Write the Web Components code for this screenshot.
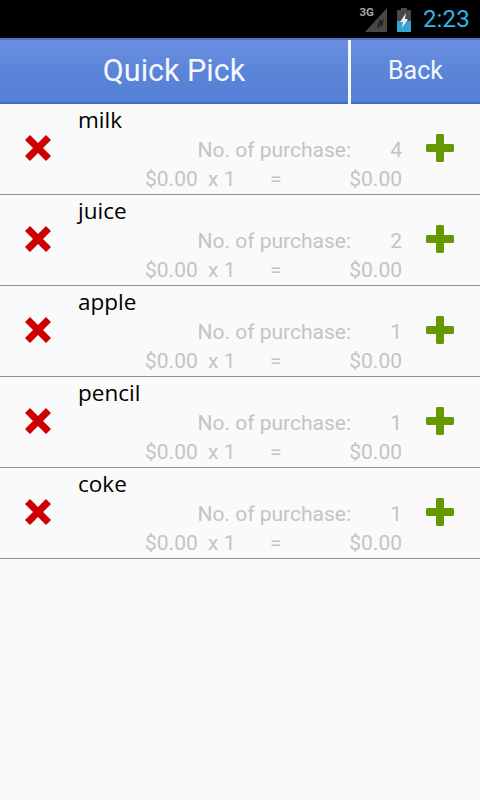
<!DOCTYPE html>
<html>
<head>
<meta charset="utf-8">
<style>
  html, body { margin: 0; height: 100%; background: #fafafa; }
  body { font-family: Roboto, "Liberation Sans", sans-serif; }
</style>
</head>
<body>
<status-bar time="2:23"></status-bar>
<title-bar heading="Quick Pick" action="Back"></title-bar>
<pick-list>
  <pick-row name="milk" count="4"></pick-row>
  <pick-row name="juice" count="2"></pick-row>
  <pick-row name="apple" count="1"></pick-row>
  <pick-row name="pencil" count="1"></pick-row>
  <pick-row name="coke" count="1"></pick-row>
</pick-list>
<script>
  class StatusBar extends HTMLElement {
    connectedCallback() {
      const root = this.attachShadow({ mode: 'open' });
      root.innerHTML = `
  <style>
  :host { display: flex; height: 38px; background: #000; align-items: center; justify-content: flex-end; padding-right: 10px; box-sizing: border-box; }
  .net { font-size: 11.5px; font-weight: 700; color: #a8a8a8; margin: -14px -9px 0 0; position: relative; }
  .sig { display: block; width: 22px; height: 24px; margin: 1px 9px 0 0; }
  .bat { display: block; width: 16px; height: 24px; margin: 1px 11px 0 0; }
  .time { font-size: 24px; color: #33b5e5; letter-spacing: .2px; }
  </style>
  <span class="net">3G</span>
  <svg class="sig" viewBox="0 0 22 24"><path d="M22 0V24H0Z" fill="#484848"/><path d="M12 19l3-8 2 2 2-3-2 9-2-2-1 3z" fill="#222"/></svg>
  <svg class="bat" viewBox="0 0 16 24">
    <rect x="5" y="0" width="6" height="3" fill="#4a4a4a"/>
    <rect x="1" y="2" width="14" height="22" fill="#484848"/>
    <rect x="1" y="13" width="14" height="11" fill="#33a5cf"/>
    <path d="M10 5L4 14h3l-1 6 6-9H9z" fill="#eee"/>
  </svg>
  <span class="time">${this.getAttribute('time')}</span>
  `;
    }
  }

  class TitleBar extends HTMLElement {
    connectedCallback() {
      const root = this.attachShadow({ mode: 'open' });
      root.innerHTML = `
  <style>
  :host { display: flex; height: 66px; box-sizing: border-box; color: #f4f7fd; background: linear-gradient(#6b8fe0, #5a84d8 55%, #5481d6); border-top: 2px solid #4f75c2; border-bottom: 2px solid #3f6cb8; }
  .heading { width: 348px; box-sizing: border-box; text-align: center; font-size: 30.5px; line-height: 62px; }
  .back { flex: 1; text-align: center; font-size: 25px; line-height: 62px; border-left: 3px solid #f4f7fd; margin-bottom: -2px; }
  </style>
  <div class="heading">${this.getAttribute('heading')}</div>
  <div class="back">${this.getAttribute('action')}</div>
  `;
    }
  }

  class PickList extends HTMLElement {
    connectedCallback() {
      const root = this.attachShadow({ mode: 'open' });
      root.innerHTML = `
  <style>
  :host { display: block; }
  </style>
  <slot></slot>
  `;
    }
  }

  class PickRow extends HTMLElement {
    connectedCallback() {
      const root = this.attachShadow({ mode: 'open' });
      root.innerHTML = `
  <style>
  :host { display: grid; grid-template-columns: 78px 324px 78px; height: 91px; box-sizing: border-box; border-bottom: 1px solid #8f8f8f; background: #fafafa; }
  .icon { display: flex; align-items: center; justify-content: center; padding: 0 2px 3px 0; }
  .icon svg { display: block; }
  .body { display: flex; flex-direction: column; }
  .name { font-family: "Open Sans", sans-serif; font-size: 22.5px; line-height: 32px; color: #000; }
  .line { display: flex; font-size: 21px; line-height: 29px; color: #c4c4c4; justify-content: flex-end; }
  .purchase { margin-top: 0; }
  .label { margin-right: 39px; }
  .count { width: 12px; text-align: right; }
  .price { width: 53px; margin-right: 10px; }
  .qty { width: 62px; }
  .eq { width: 79px; }
  .total { width: 53px; text-align: right; }
  </style>
  <div class="icon">
    <svg width="28" height="28" viewBox="0 0 28 28"><path d="M6 1l8 8 8-8 5 5-8 8 8 8-5 5-8-8-8 8-5-5 8-8-8-8z" fill="#cc0000"/></svg>
  </div>
  <div class="body">
    <div class="name">${this.getAttribute('name')}</div>
    <div class="line purchase"><span class="label">No. of purchase:</span><span class="count">${this.getAttribute('count')}</span></div>
    <div class="line"><span class="price">$0.00</span><span class="qty">x 1</span><span class="eq">=</span><span class="total">$0.00</span></div>
  </div>
  <div class="icon">
    <svg width="28" height="28" viewBox="0 0 28 28"><path d="M11 0h6l1 1v9h9l1 1v6l-1 1h-9v9l-1 1h-6l-1-1v-9H1l-1-1v-6l1-1h9V1z" fill="#669900"/></svg>
  </div>
  `;
    }
  }

  window.customElements.define('status-bar', StatusBar);
  window.customElements.define('title-bar', TitleBar);
  window.customElements.define('pick-list', PickList);
  window.customElements.define('pick-row', PickRow);
</script>
</body>
</html>
